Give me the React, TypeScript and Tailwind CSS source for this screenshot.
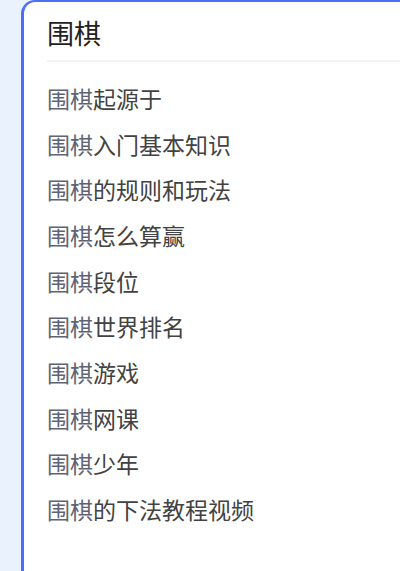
const items = [
  "起源于",
  "入门基本知识",
  "的规则和玩法",
  "怎么算赢",
  "段位",
  "世界排名",
  "游戏",
  "网课",
  "少年",
  "的下法教程视频",
];

export default function App() {
  return (
    <div
      className="h-[571px] overflow-hidden bg-[#eaf2fd] pl-[21px]"
      style={{ fontFamily: '"Noto Sans CJK SC", "Noto Sans", sans-serif' }}
    >
      <div className="h-[600px] w-[420px] rounded-tl-[14px] border-l-[3px] border-t-2 border-[#4d6ef6] bg-white pl-[23px]">
        <div className="h-[60px] border-b-2 border-[#f3f3f3] pt-[16px]">
          <h1 className="text-[27px] leading-[30px] text-[#222]">围棋</h1>
        </div>
        <ul className="mt-[14px]">
          {items.map((rest) => (
            <li className="text-[23px] leading-[45.67px] text-[#424242]" key={rest}>
              <span className="text-[#5f6474]">围棋</span>
              {rest}
            </li>
          ))}
        </ul>
      </div>
    </div>
  );
}
